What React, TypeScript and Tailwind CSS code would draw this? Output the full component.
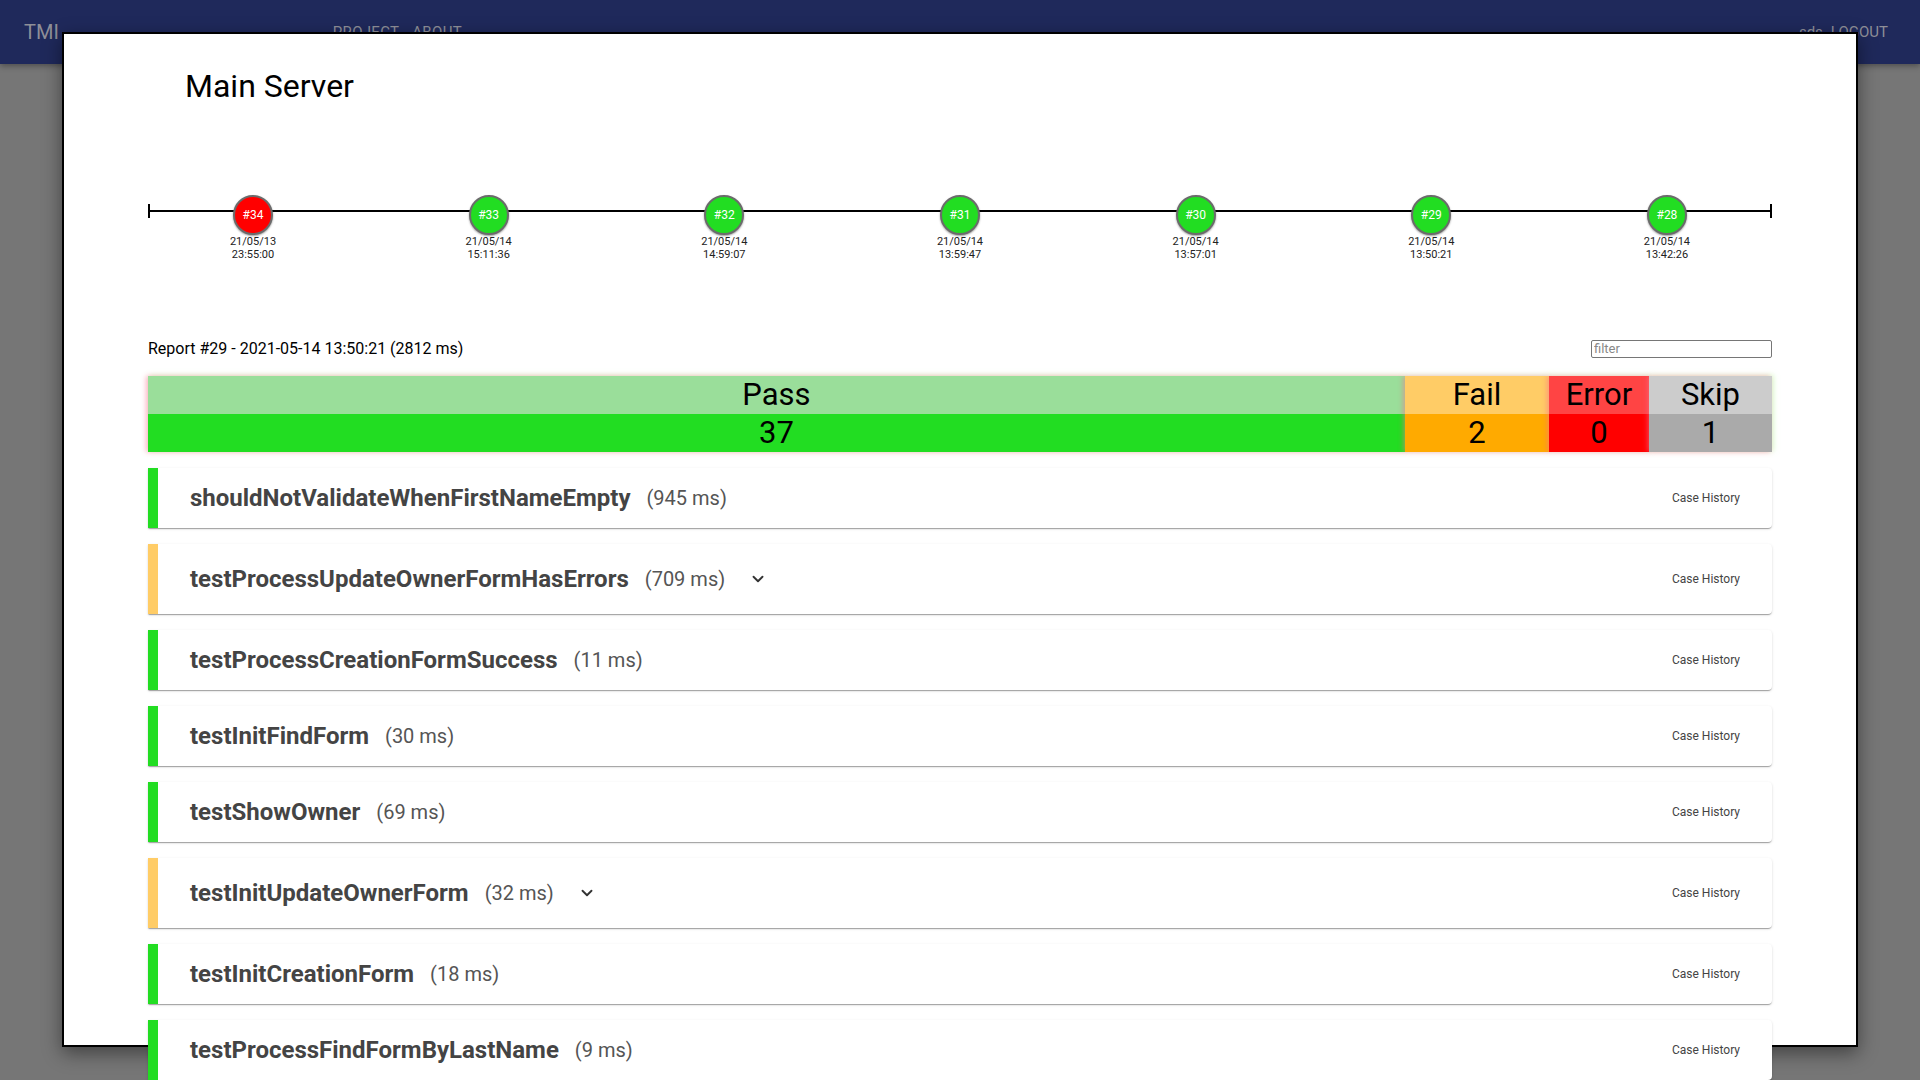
import { ChevronDown } from "lucide-react";

type Build = { id: number; date: string; time: string; failed?: boolean };

const builds: Build[] = [
  { id: 34, date: "21/05/13", time: "23:55:00", failed: true },
  { id: 33, date: "21/05/14", time: "15:11:36" },
  { id: 32, date: "21/05/14", time: "14:59:07" },
  { id: 31, date: "21/05/14", time: "13:59:47" },
  { id: 30, date: "21/05/14", time: "13:57:01" },
  { id: 29, date: "21/05/14", time: "13:50:21" },
  { id: 28, date: "21/05/14", time: "13:42:26" },
];

type Case = { name: string; ms: number; status: "pass" | "fail" };

const cases: Case[] = [
  { name: "shouldNotValidateWhenFirstNameEmpty", ms: 945, status: "pass" },
  { name: "testProcessUpdateOwnerFormHasErrors", ms: 709, status: "fail" },
  { name: "testProcessCreationFormSuccess", ms: 11, status: "pass" },
  { name: "testInitFindForm", ms: 30, status: "pass" },
  { name: "testShowOwner", ms: 69, status: "pass" },
  { name: "testInitUpdateOwnerForm", ms: 32, status: "fail" },
  { name: "testInitCreationForm", ms: 18, status: "pass" },
  { name: "testProcessFindFormByLastName", ms: 9, status: "pass" },
];

const Timeline = () => (
  <div className="relative mt-[93px] w-full">
    <div className="absolute left-0 right-0 top-[15px] h-[2px] bg-black" />
    <div className="absolute left-0 top-[9px] h-[14px] w-[2px] bg-black" />
    <div className="absolute right-0 top-[9px] h-[14px] w-[2px] bg-black" />
    <div className="relative flex justify-between px-[75px]">
      {builds.map((b) => (
        <div key={b.id} className="flex w-[60px] flex-col items-center">
          <div
            className={
              "flex h-10 w-10 items-center justify-center rounded-full border-2 border-[#6b6b6b] text-[12px] text-white shadow-[0_1px_2px_rgba(0,0,0,0.4)] " +
              (b.failed ? "bg-[#ff0000]" : "bg-[#22dd22]")
            }
          >
            #{b.id}
          </div>
          <div className="mt-[1px] text-center text-[11px] leading-[12.5px] text-[#222]">
            <div>{b.date}</div>
            <div>{b.time}</div>
          </div>
        </div>
      ))}
    </div>
  </div>
);

const Summary = () => {
  const cols = [
    { label: "Pass", value: 37, w: "w-[1257px]", head: "bg-[#9ade9a]", body: "bg-[#22dd22]" },
    { label: "Fail", value: 2, w: "w-[144px]", head: "bg-[#ffcc66]", body: "bg-[#ffaa00]" },
    { label: "Error", value: 0, w: "w-[100px]", head: "bg-[#ff4444]", body: "bg-[#ff0000]" },
    { label: "Skip", value: 1, w: "w-[123px]", head: "bg-[#cccccc]", body: "bg-[#aaaaaa]" },
  ];
  return (
    <div className="mt-[18px] flex">
      {cols.map((c) => (
        <div
          key={c.label}
          className={
            c.w +
            " shadow-[-2px_0_5px_rgba(255,90,130,0.45),2px_-1px_5px_rgba(190,255,170,0.5)]"
          }
        >
          <div className={c.head + " flex h-[38px] items-center justify-center text-[31px] text-black"}>
            {c.label}
          </div>
          <div className={c.body + " flex h-[38px] items-center justify-center text-[31px] text-black"}>
            {c.value}
          </div>
        </div>
      ))}
    </div>
  );
};

const CaseRow = ({ c }: { c: Case }) => {
  const fail = c.status === "fail";
  return (
    <div
      className={
        "flex items-center justify-between rounded-r-[4px] border-l-[10px] bg-white pl-[32px] pr-[32px] shadow-[0_2px_1px_-1px_rgba(0,0,0,0.2),0_1px_1px_0_rgba(0,0,0,0.14),0_1px_3px_0_rgba(0,0,0,0.12)] " +
        (fail ? "h-[70px] border-[#ffcc66]" : "h-[60px] border-[#22dd22]")
      }
    >
      <div className="flex items-center">
        <span className="text-[24px] font-bold text-[#444]">{c.name}</span>
        <span className="ml-4 text-[20px] text-[#555]">({c.ms} ms)</span>
        {fail && (
          <span className="ml-[13px] flex h-10 w-10 items-center justify-center text-[#333]">
            <ChevronDown size={18} strokeWidth={2.5} />
          </span>
        )}
      </div>
      <span className="text-[12px] text-[#444]">Case History</span>
    </div>
  );
};

export default function App() {
  return (
    <div className="relative h-screen w-full overflow-hidden bg-[#767676] font-['Roboto',sans-serif]">
      <div className="flex h-16 items-center bg-[#1f295b] px-6 shadow-[0_2px_6px_rgba(0,0,0,0.35)]">
        <span className="text-[20px] text-[#8e8f98]">TMI</span>
        <nav className="ml-[274px] flex gap-[13px] text-[15px] tracking-[0.3px] text-[#8e8f98]">
          <span>PROJECT</span>
          <span>ABOUT</span>
        </nav>
        <div className="ml-auto mr-2 flex gap-[8px] text-[15px] text-[#8e8f98]">
          <span>sds</span>
          <span>LOGOUT</span>
        </div>
      </div>

      <div className="absolute left-[62px] top-[32px] h-[1015px] w-[1796px] border-2 border-black bg-white shadow-[0_6px_18px_rgba(0,0,0,0.45)]">
        <div className="px-[84px] pt-[36px]">
          <h1 className="ml-[37px] text-[32px] leading-8 text-black">Main Server</h1>
          <Timeline />
          <div className="mt-[79px] flex h-[18px] items-center justify-between">
            <span className="text-[16px] text-black">Report #29 - 2021-05-14 13:50:21 (2812 ms)</span>
            <input
              placeholder="filter"
              className="h-[18px] w-[181px] rounded-[2px] border border-[#767676] px-[2px] text-[13px] outline-none placeholder:text-[#888]"
            />
          </div>
          <Summary />
          <div className="mt-4 flex flex-col gap-4">
            {cases.map((c) => (
              <CaseRow key={c.name} c={c} />
            ))}
          </div>
        </div>
      </div>
    </div>
  );
}
